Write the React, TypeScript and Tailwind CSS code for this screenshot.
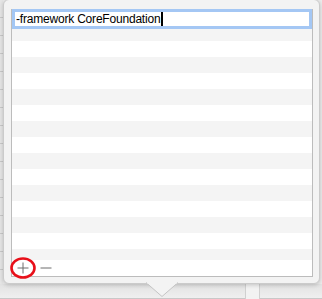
import React from 'react'

const ROWS = Array.from({ length: 16 }, (_, i) => i)

export default function App() {
  return (
    <div
      className="relative w-[322px] h-[299px] overflow-hidden bg-[#ececec]"
      style={{ fontFamily: '"Liberation Sans", Arial, sans-serif' }}
    >
      {/* window behind the popover */}
      <div className="flex h-full flex-col">
        <div className="flex flex-1">
          <div className="w-[3px] bg-[repeating-linear-gradient(to_bottom,#e6e6e6_0px,#e6e6e6_17px,#c9c9c9_17px,#c9c9c9_18px)]" />
          <div className="flex-1" />
        </div>
        <div className="flex h-[15px] bg-[linear-gradient(to_bottom,#e2e2e2,#f0f0f0)]">
          <div className="w-[245px] border-b border-[#c8c8c8]" />
          <div className="w-[15px] border-x border-[#d0d0d0] bg-[#f2f2f2]" />
          <div className="flex-1 border-b border-[#c8c8c8]" />
        </div>
      </div>

      {/* popover */}
      <div className="absolute left-[3px] top-[-1px] w-[317px] h-[285px] rounded-[6px] border border-[#cbcbcb] bg-[#f3f3f3] shadow-[0_1px_4px_rgba(0,0,0,0.2)] pt-[9px] pl-[7px] pr-[6px]">
        <div className="relative flex h-[268px] w-[302px] flex-col border border-[#bcbcbc] bg-white">
          <div className="flex flex-1 flex-col overflow-hidden">
            <div className="h-[15px] shrink-0 bg-white" />
            {ROWS.map((i) => (
              <div
                key={i}
                className={
                  i % 2 === 0
                    ? 'h-[16px] shrink-0 bg-[#f4f4f4]'
                    : 'h-[16px] shrink-0 bg-white'
                }
              />
            ))}
          </div>

          {/* add / remove bar */}
          <div className="relative flex h-[16px] shrink-0 items-center gap-[11px] bg-white pl-[5px]">
            <svg width="12" height="12" viewBox="0 0 12 12" className="shrink-0 text-[#6c6c6c]">
              <path d="M6 0.5V11.5M0.5 6H11.5" stroke="currentColor" strokeWidth="1" />
            </svg>
            <svg width="12" height="12" viewBox="0 0 12 12" className="shrink-0 text-[#6c6c6c]">
              <path d="M0.5 6H11.5" stroke="currentColor" strokeWidth="1" />
            </svg>
            <svg
              width="28"
              height="24"
              viewBox="0 0 28 24"
              className="pointer-events-none absolute left-[-2px] top-[-3px] overflow-visible"
            >
              <ellipse cx="13" cy="11" rx="11.5" ry="9.5" fill="none" stroke="#e8101a" strokeWidth="2.6" />
            </svg>
          </div>

          {/* field being edited */}
          <div className="absolute left-0 top-[-1px] flex h-[20px] w-[300px] items-center border-[3px] border-[#a4c7f4] bg-white pl-[1px]">
            <span className="text-[12px] leading-[14px] tracking-[-0.2px] text-black">-framework CoreFoundation</span>
            <span className="ml-[1px] inline-block h-[14px] w-[1.5px] bg-black" />
          </div>
        </div>
      </div>

      {/* popover arrow */}
      <svg
        width="32"
        height="16"
        viewBox="0 0 32 16"
        className="absolute left-[146px] top-[282px]"
      >
        <path d="M0 0.5 L16 14.5 L32 0.5" fill="#f3f3f3" stroke="#c4c4c4" strokeWidth="1" />
        <rect x="1" y="0" width="30" height="1.5" fill="#f3f3f3" />
      </svg>
    </div>
  )
}
